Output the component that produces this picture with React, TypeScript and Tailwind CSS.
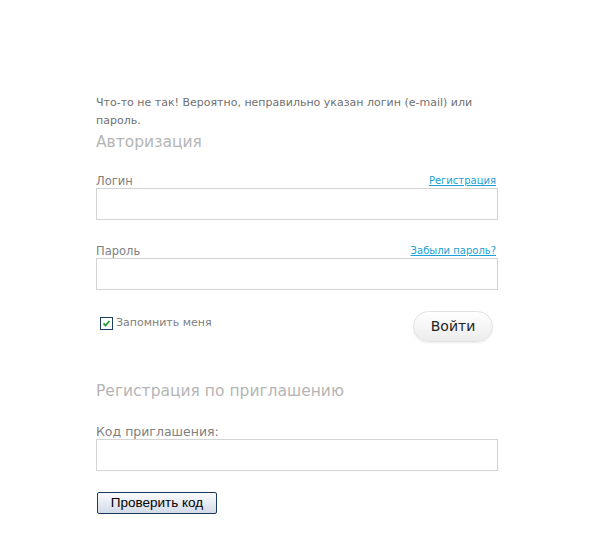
export default function App() {
  return (
    <div
      className="w-[606px] h-[551px] bg-white"
      style={{ fontFamily: '"DejaVu Sans", Tahoma, sans-serif' }}
    >
      <div className="w-[402px] ml-[96px] pt-[94px]">
        <p className="text-[11px] leading-[18px] text-[#707070] pr-[20px]">
          Что-то не так! Вероятно, неправильно указан логин (e-mail) или пароль.
        </p>
        <h2 className="text-[15.5px] leading-[22px] text-[#b5b5b5] mt-[1px]">Авторизация</h2>

        <div className="mt-[16px] flex justify-between items-end h-[18px] pr-[2px]">
          <span className="text-[11.5px] leading-[12px] text-[#808080]">Логин</span>
          <a href="#" className="text-[10px] leading-[12px] text-[#1a9fd6] underline">Регистрация</a>
        </div>
        <input className="block w-full h-[32px] mt-[1px] border border-[#d4d4d4] outline-none" />

        <div className="mt-[19px] flex justify-between items-end h-[18px] pr-[2px]">
          <span className="text-[11.5px] leading-[12px] text-[#808080]">Пароль</span>
          <a href="#" className="text-[10px] leading-[12px] text-[#1a9fd6] underline">Забыли пароль?</a>
        </div>
        <input type="password" className="block w-full h-[32px] mt-[1px] border border-[#d4d4d4] outline-none" />

        <div className="mt-[21px] flex justify-between items-start">
          <label className="flex items-center gap-[3px] mt-[4px] ml-[4px] text-[11px] text-[#808080]">
            <span className="w-[13px] h-[13px] border border-[#1c3f5e] bg-white flex items-center justify-center">
              <svg width="9" height="9" viewBox="0 0 9 9">
                <path d="M1.5 4.5 L3.5 6.5 L7.5 2" fill="none" stroke="#1e9e2c" strokeWidth="1.8" />
              </svg>
            </span>
            Запомнить меня
          </label>
          <button className="w-[80px] h-[31px] mr-[5px] rounded-full border border-[#e2e2e2] bg-gradient-to-b from-white to-[#ececec] text-[14px] text-[#222] shadow-[0_1px_2px_rgba(0,0,0,0.08)]">
            Войти
          </button>
        </div>

        <h2 className="mt-[38px] text-[15.5px] leading-[22px] text-[#b5b5b5]">Регистрация по приглашению</h2>

        <div className="mt-[18px] flex items-end h-[18px]">
          <span className="text-[12.5px] leading-[13px] text-[#808080]">Код приглашения:</span>
        </div>
        <input className="block w-full h-[32px] mt-[1px] border border-[#d4d4d4] outline-none" />

        <button className="mt-[21px] ml-[1px] w-[120px] h-[22px] border border-[#1c3a5c] rounded-[2px] bg-gradient-to-b from-[#fafbfd] to-[#d3dbe8] text-[13.5px] leading-[20px] text-black" style={{ fontFamily: '"Liberation Sans", Arial, sans-serif' }}>
          Проверить код
        </button>
      </div>
    </div>
  );
}
